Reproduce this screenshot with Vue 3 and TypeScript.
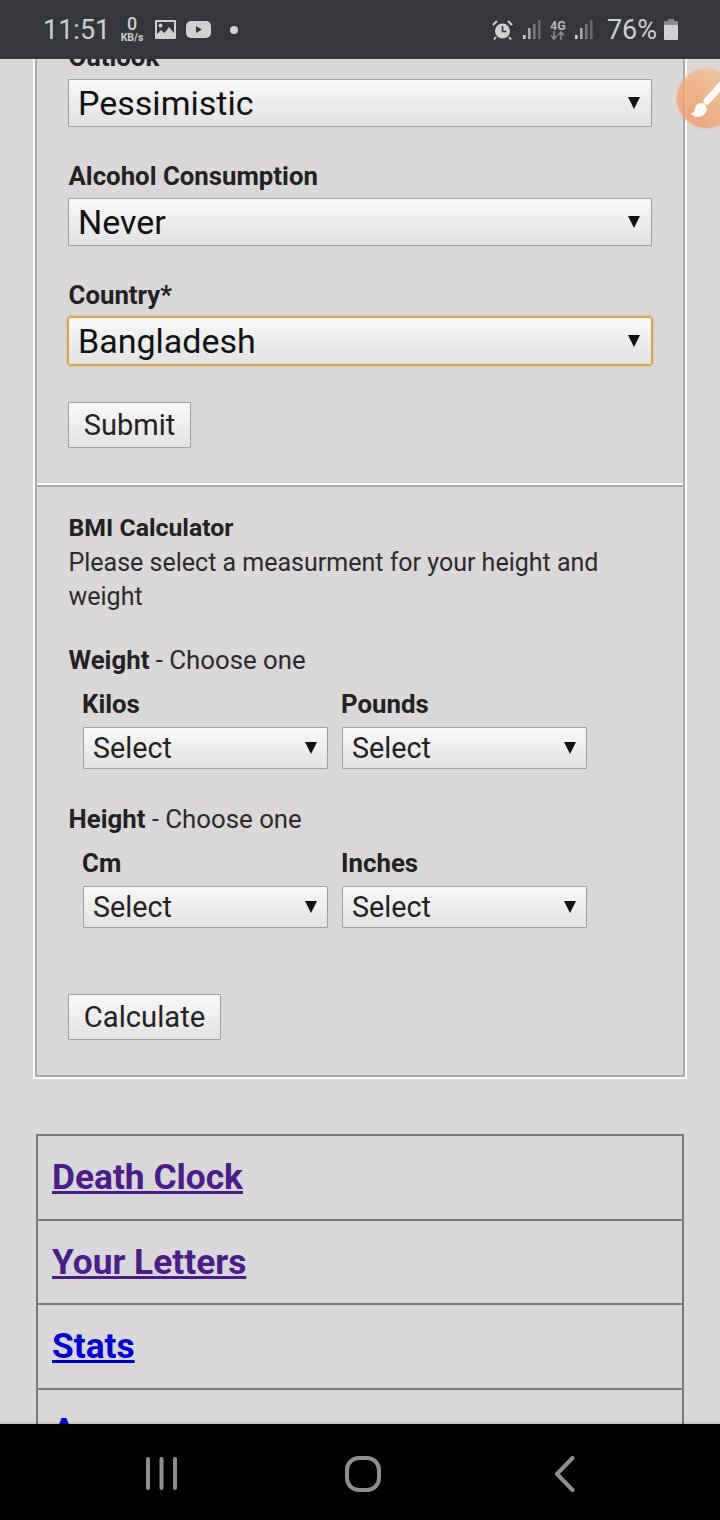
<script setup lang="ts">
import { ref } from 'vue';

const outlook = ref('Pessimistic');
const alcohol = ref('Never');
const country = ref('Bangladesh');

const weightFields = ['Kilos', 'Pounds'];
const heightFields = ['Cm', 'Inches'];

const links = [
  { label: 'Death Clock', visited: true },
  { label: 'Your Letters', visited: true },
  { label: 'Stats', visited: false },
  { label: 'Answers', visited: false },
];
</script>

<template>
  <div class="phone">
    <!-- status bar -->
    <header class="status-bar">
      <span class="clock">11:51</span>
      <span class="speed"><b>0</b><small>KB/s</small></span>
      <svg class="ic-image" width="21" height="19" viewBox="0 0 21 19">
        <path fill="#d0d0d0" fill-rule="evenodd" d="M1 0h19a1 1 0 0 1 1 1v17a1 1 0 0 1-1 1H1a1 1 0 0 1-1-1V1a1 1 0 0 1 1-1zM2 2v12l4-4 3.500 3L14 7l5 6V2z" />
        <circle cx="5.500" cy="5.500" r="2" fill="#d0d0d0" />
      </svg>
      <svg class="ic-video" width="25" height="17" viewBox="0 0 25 17">
        <rect width="25" height="17" rx="5" fill="#d0d0d0" />
        <path d="M10 5l6 3.500-6 3.500z" fill="#36373c" />
      </svg>
      <span class="dot"></span>
      <span class="spacer"></span>
      <svg class="ic-alarm" width="21" height="20" viewBox="0 0 21 20">
        <circle cx="10.500" cy="11" r="7.500" fill="#d0d0d0" />
        <path d="M10.500 6v5.500h4" fill="none" stroke="#36373c" stroke-width="1.600" />
        <path d="M1 5l4-4M20 5l-4-4M4 17l-2 2.500M17 17l2 2.500" stroke="#d0d0d0" stroke-width="2" />
      </svg>
      <svg class="ic-signal" width="18" height="19" viewBox="0 0 18 19">
        <rect x="0" y="15" width="2.600" height="4" fill="#d0d0d0" />
        <rect x="5" y="8" width="2.600" height="11" fill="#aaaaac" />
        <rect x="10" y="4" width="2.600" height="15" fill="#78797c" />
        <rect x="15" y="0" width="2.600" height="19" fill="#68696c" />
      </svg>
      <span class="net"><b>4G</b>
        <svg width="15" height="9" viewBox="0 0 15 9">
          <path d="M4 0v8M1 4.500l3 3.500 3-3.500" fill="none" stroke="#8a8b8e" stroke-width="1.600" />
          <path d="M11 9V1M8 4.500L11 1l3 3.500" fill="none" stroke="#8a8b8e" stroke-width="1.600" />
        </svg>
      </span>
      <svg class="ic-signal" width="18" height="19" viewBox="0 0 18 19">
        <rect x="0" y="15" width="2.600" height="4" fill="#d0d0d0" />
        <rect x="5" y="8" width="2.600" height="11" fill="#aaaaac" />
        <rect x="10" y="4" width="2.600" height="15" fill="#78797c" />
        <rect x="15" y="0" width="2.600" height="19" fill="#68696c" />
      </svg>
      <span class="percent">76%</span>
      <svg class="ic-battery" width="14" height="21" viewBox="0 0 14 21">
        <path fill="#8a8b8e" d="M4 0h6v2h3a1 1 0 0 1 1 1v3H0V3a1 1 0 0 1 1-1h3z" />
        <path fill="#d0d0d0" d="M0 6h14v14a1 1 0 0 1-1 1H1a1 1 0 0 1-1-1z" />
      </svg>
    </header>

    <main class="viewport">
      <div class="page">
        <div class="fieldset">
          <form class="section" @submit.prevent>
            <label class="field-label">Outlook</label>
            <div class="select-wrap big">
              <select v-model="outlook"><option>Pessimistic</option></select>
            </div>
            <label class="field-label">Alcohol Consumption</label>
            <div class="select-wrap big">
              <select v-model="alcohol"><option>Never</option></select>
            </div>
            <label class="field-label">Country*</label>
            <div class="select-wrap big focused">
              <select v-model="country"><option>Bangladesh</option></select>
            </div>
            <button class="btn submit" type="submit">Submit</button>
          </form>

          <div class="divider"></div>

          <form class="section bmi" @submit.prevent>
            <div class="bmi-title">BMI Calculator</div>
            <p class="bmi-text">Please select a measurment for your height and weight</p>

            <div class="choose"><b>Weight</b> - Choose one</div>
            <div class="pair">
              <div v-for="f in weightFields" :key="f" class="pair-item">
                <label class="field-label small">{{ f }}</label>
                <div class="select-wrap">
                  <select><option>Select</option></select>
                </div>
              </div>
            </div>

            <div class="choose second"><b>Height</b> - Choose one</div>
            <div class="pair">
              <div v-for="f in heightFields" :key="f" class="pair-item">
                <label class="field-label small">{{ f }}</label>
                <div class="select-wrap">
                  <select><option>Select</option></select>
                </div>
              </div>
            </div>

            <button class="btn calc" type="submit">Calculate</button>
          </form>
        </div>

        <table class="links">
          <tbody>
            <tr v-for="l in links" :key="l.label">
              <td><a href="#" :class="{ visited: l.visited }" @click.prevent>{{ l.label }}</a></td>
            </tr>
          </tbody>
        </table>
      </div>

      <!-- floating brush button -->
      <div class="fab">
        <svg width="59" height="59" viewBox="0 0 59 59">
          <path d="M47 13L30 32" stroke="#fff" stroke-width="7" stroke-linecap="round" fill="none" />
          <path fill="#fff" d="M14 44c3 .5 3.500-1.500 3.800-4 .4-3.500 3.500-6.500 7.200-6 3.500.5 5.500 4 4.500 7.500-1 4-5 6.500-9 6.500-2.500 0-5-1.500-6.500-4z" />
        </svg>
      </div>
    </main>

    <!-- android nav -->
    <footer class="nav-bar">
      <svg width="32" height="34" viewBox="0 0 32 34">
        <path d="M3 3v29M16.500 3v29M30 3v29" stroke="#8f8f8f" stroke-width="4" stroke-linecap="round" fill="none" />
      </svg>
      <svg width="36" height="36" viewBox="0 0 36 36">
        <rect x="2" y="2" width="32" height="32" rx="12" fill="none" stroke="#8f8f8f" stroke-width="4" />
      </svg>
      <svg width="22" height="36" viewBox="0 0 22 36">
        <path d="M18.500 2L3 18l15.500 16" stroke="#8f8f8f" stroke-width="4" stroke-linecap="round" stroke-linejoin="round" fill="none" />
      </svg>
    </footer>
  </div>
</template>

<style>
body {
  background: #d9d7d8;
}
</style>

<style scoped>
.phone {
  width: 720px;
  height: 1520px;
  display: flex;
  flex-direction: column;
  overflow: hidden;
  background: #d9d7d8;
  font-family: Roboto, "Liberation Sans", sans-serif;
  color: #222;
}

/* Status bar */
.status-bar {
  height: 59px;
  flex: none;
  background: #36373c;
  color: #cfcfcf;
  display: flex;
  align-items: center;
  padding: 0 42px 0 43px;
  position: relative;
  z-index: 3;
}
.clock {
  font-size: 27px;
  width: 76px;
  flex: none;
}
.speed {
  display: flex;
  flex-direction: column;
  align-items: center;
  width: 26px;
  flex: none;
}
.speed b {
  font-size: 18px;
  line-height: 16px;
  font-weight: 500;
}
.speed small {
  font-size: 10.500px;
  line-height: 11px;
  font-weight: 700;
}
.ic-image {
  margin-left: 10px;
}
.ic-video {
  margin-left: 10px;
}
.dot {
  width: 8px;
  height: 8px;
  border-radius: 50%;
  background: #d0d0d0;
  margin-left: 19px;
}
.spacer {
  flex: 1;
}
.ic-signal {
  margin-left: 10px;
}
.net {
  display: flex;
  flex-direction: column;
  align-items: center;
  width: 16px;
  margin-left: 9px;
}
.net b {
  font-size: 12.500px;
  line-height: 11px;
  font-weight: 700;
  color: #b5b5b7;
}
.net + .ic-signal {
  margin-left: 9px;
}
.percent {
  font-size: 27px;
  margin-left: 14px;
}
.ic-battery {
  margin-left: 7px;
}

/* Scrolled page */
.viewport {
  flex: 1;
  position: relative;
  overflow: hidden;
}
.viewport::after {
  content: "";
  position: absolute;
  left: 0;
  right: 0;
  bottom: 0;
  height: 3px;
  background: linear-gradient(rgba(0, 0, 0, 0), rgba(0, 0, 0, 0.12));
}
.page {
  margin-top: -18px;
  padding: 0 33px;
}
.fieldset {
  border: 2px solid #fff;
  border-top: 0;
  width: 654px;
  box-sizing: border-box;
  margin-bottom: 55px;
}
.section {
  border: 2px solid #a9a9a9;
  border-top: 0;
  border-bottom: 0;
  padding: 0 31px 35px;
}
.section.bmi {
  border-top: 2px solid #a9a9a9;
  border-bottom: 2px solid #a9a9a9;
  padding-top: 22px;
}
.divider {
  height: 2px;
  background: #fff;
  border-left: 2px solid #a9a9a9;
  border-right: 2px solid #a9a9a9;
}

.field-label {
  display: block;
  font-size: 25.800px;
  font-weight: 700;
  line-height: 33px;
  color: #222;
  margin: 0 0 5px 0.500px;
}
.section > .field-label:not(:first-child) {
  margin-top: 33px;
}
.field-label.small {
  margin: 0 0 6px -1px;
}

.select-wrap {
  position: relative;
}
.select-wrap select {
  display: block;
  width: 100%;
  height: 42px;
  box-sizing: border-box;
  appearance: none;
  border: 1px solid #a0a0a0;
  border-radius: 1px;
  background: linear-gradient(#f8f8f8, #e2e2e2);
  color: #222;
  font-family: inherit;
  font-size: 28.700px;
  padding: 0 9px;
  outline: none;
}
.select-wrap::after {
  content: "";
  position: absolute;
  top: 50%;
  right: 11px;
  margin-top: -6px;
  border-left: 6px solid transparent;
  border-right: 6px solid transparent;
  border-top: 12px solid #111;
  pointer-events: none;
}
.select-wrap.big::after {
  right: 12px;
}
.select-wrap.big select {
  height: 48px;
  font-size: 34px;
  color: #111;
  padding: 0 9px;
}
.select-wrap.focused select {
  border: 1px solid #d9a24a;
  border-radius: 3px;
  box-shadow: 0 0 0 1px #dba548, 0 0 1px 2px rgba(224, 163, 62, 0.3);
}

.btn {
  display: block;
  box-sizing: border-box;
  height: 46px;
  border: 1px solid #a0a0a0;
  border-radius: 1px;
  background: linear-gradient(#f8f8f8, #e2e2e2);
  color: #222;
  font-family: inherit;
  font-size: 29px;
  padding: 0;
}
.submit {
  width: 123px;
  margin-top: 37px;
}
.calc {
  width: 153px;
  margin-top: 66px;
  font-size: 29.200px;
}

.bmi-title {
  font-size: 24.800px;
  font-weight: 700;
  line-height: 37px;
  margin-left: 0.500px;
}
.bmi-text {
  margin: 0 0 0 0.500px;
  font-size: 25px;
  line-height: 34px;
  color: #2b2b2b;
}
.choose {
  margin: 29px 0 0 0.500px;
  font-size: 25.800px;
  line-height: 34px;
  color: #2b2b2b;
}
.choose b {
  color: #222;
}
.choose.second {
  margin-top: 33px;
}
.pair {
  display: flex;
  gap: 14px;
  padding-left: 15px;
  margin-top: 11px;
}
.pair-item {
  width: 245px;
}

/* Link table */
.links {
  width: 648px;
  margin-left: 3px;
  border-collapse: collapse;
}
.links td {
  border: 2px solid #7c7a7b;
  height: 84.500px;
  padding: 0 14px;
  box-sizing: border-box;
}
.links a {
  font-size: 35.300px;
  font-weight: 700;
  color: #0000d8;
}
.links a.visited {
  color: #4b1c8c;
}

/* Floating button */
.fab {
  position: absolute;
  top: 10px;
  left: 677px;
  width: 59px;
  height: 59px;
  border-radius: 50%;
  background: linear-gradient(45deg, rgba(244, 145, 96, 0.8), rgba(241, 200, 146, 0.8));
  box-shadow: 0 0 0 2px rgba(238, 170, 130, 0.2);
}
.fab svg {
  display: block;
}

/* Navigation bar */
.nav-bar {
  height: 96px;
  flex: none;
  background: #000;
  position: relative;
}
.nav-bar svg {
  position: absolute;
  top: 32px;
}
.nav-bar svg:nth-child(1) {
  left: 145px;
}
.nav-bar svg:nth-child(2) {
  left: 345px;
}
.nav-bar svg:nth-child(3) {
  left: 554px;
}
</style>
